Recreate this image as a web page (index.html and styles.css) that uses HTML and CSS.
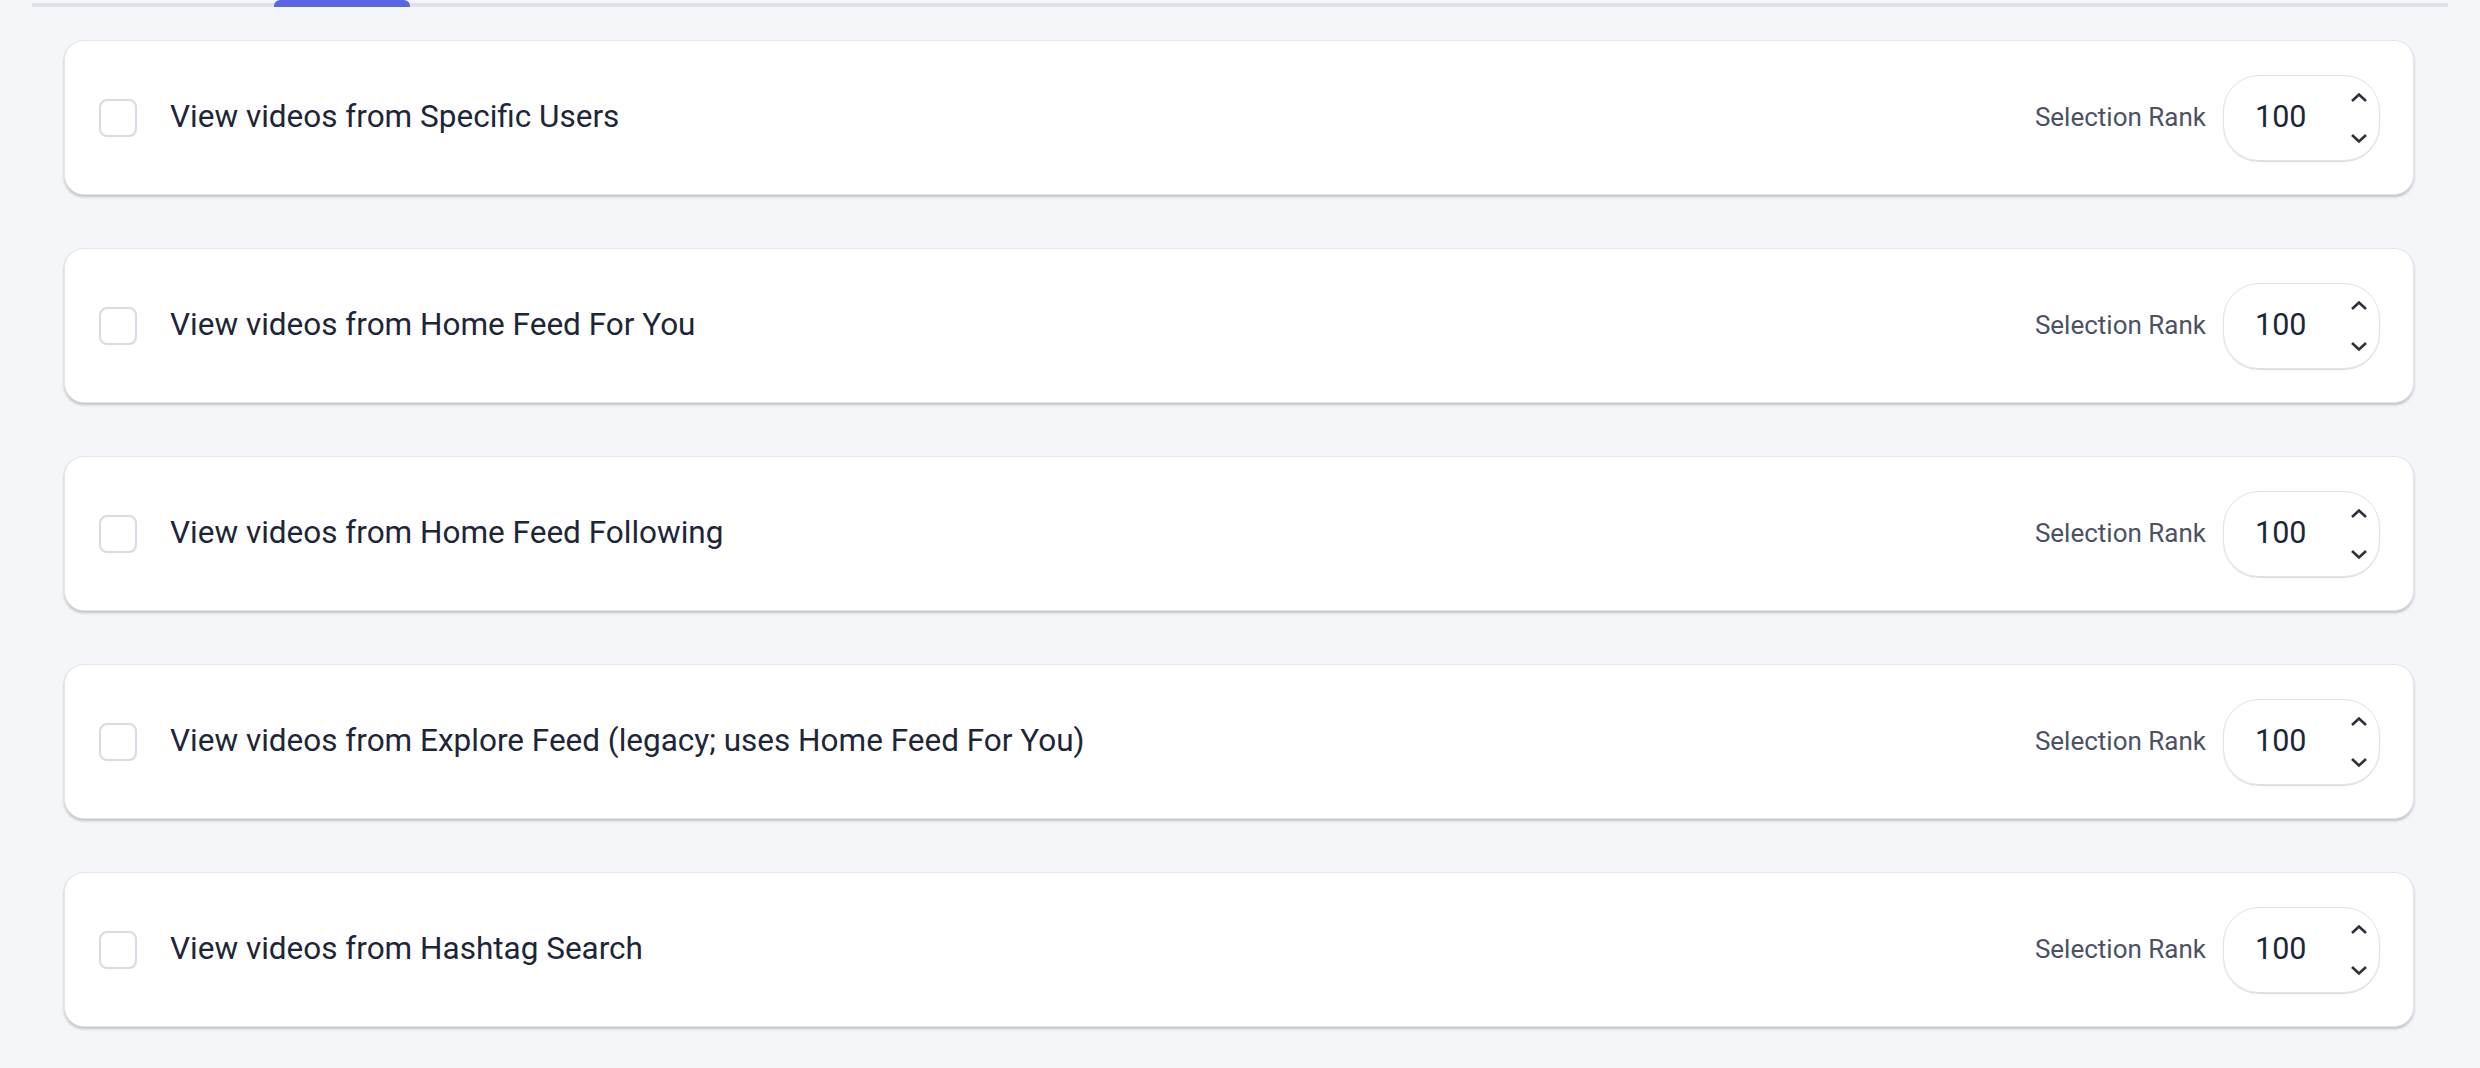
FILE: index.html
```html
<!DOCTYPE html>
<html>
<head>
    <meta charset="utf-8">
    <title>Video Sources</title>
    <link rel="stylesheet" href="styles.css">
</head>
<body>
    <div class="tabs">
        <div class="tab-indicator"></div>
    </div>

    <div class="source-list">
        <div class="source-card">
            <label class="source-label">
                <input type="checkbox" class="source-check">
                <span class="source-text">View videos from Specific Users</span>
            </label>
            <div class="rank">
                <span class="rank-title">Selection Rank</span>
                <div class="rank-box">
                    <span class="rank-value">100</span>
                    <div class="spin">
                        <svg width="18" height="11" viewBox="0 0 18 11"><path d="M2 9 L9 2.5 L16 9" fill="none" stroke="#30323a" stroke-width="2.6"/></svg>
                        <svg width="18" height="11" viewBox="0 0 18 11"><path d="M2 2 L9 8.5 L16 2" fill="none" stroke="#30323a" stroke-width="2.6"/></svg>
                    </div>
                </div>
            </div>
        </div>

        <div class="source-card">
            <label class="source-label">
                <input type="checkbox" class="source-check">
                <span class="source-text">View videos from Home Feed For You</span>
            </label>
            <div class="rank">
                <span class="rank-title">Selection Rank</span>
                <div class="rank-box">
                    <span class="rank-value">100</span>
                    <div class="spin">
                        <svg width="18" height="11" viewBox="0 0 18 11"><path d="M2 9 L9 2.5 L16 9" fill="none" stroke="#30323a" stroke-width="2.6"/></svg>
                        <svg width="18" height="11" viewBox="0 0 18 11"><path d="M2 2 L9 8.5 L16 2" fill="none" stroke="#30323a" stroke-width="2.6"/></svg>
                    </div>
                </div>
            </div>
        </div>

        <div class="source-card">
            <label class="source-label">
                <input type="checkbox" class="source-check">
                <span class="source-text">View videos from Home Feed Following</span>
            </label>
            <div class="rank">
                <span class="rank-title">Selection Rank</span>
                <div class="rank-box">
                    <span class="rank-value">100</span>
                    <div class="spin">
                        <svg width="18" height="11" viewBox="0 0 18 11"><path d="M2 9 L9 2.5 L16 9" fill="none" stroke="#30323a" stroke-width="2.6"/></svg>
                        <svg width="18" height="11" viewBox="0 0 18 11"><path d="M2 2 L9 8.5 L16 2" fill="none" stroke="#30323a" stroke-width="2.6"/></svg>
                    </div>
                </div>
            </div>
        </div>

        <div class="source-card">
            <label class="source-label">
                <input type="checkbox" class="source-check">
                <span class="source-text">View videos from Explore Feed (legacy; uses Home Feed For You)</span>
            </label>
            <div class="rank">
                <span class="rank-title">Selection Rank</span>
                <div class="rank-box">
                    <span class="rank-value">100</span>
                    <div class="spin">
                        <svg width="18" height="11" viewBox="0 0 18 11"><path d="M2 9 L9 2.5 L16 9" fill="none" stroke="#30323a" stroke-width="2.6"/></svg>
                        <svg width="18" height="11" viewBox="0 0 18 11"><path d="M2 2 L9 8.5 L16 2" fill="none" stroke="#30323a" stroke-width="2.6"/></svg>
                    </div>
                </div>
            </div>
        </div>

        <div class="source-card">
            <label class="source-label">
                <input type="checkbox" class="source-check">
                <span class="source-text">View videos from Hashtag Search</span>
            </label>
            <div class="rank">
                <span class="rank-title">Selection Rank</span>
                <div class="rank-box">
                    <span class="rank-value">100</span>
                    <div class="spin">
                        <svg width="18" height="11" viewBox="0 0 18 11"><path d="M2 9 L9 2.5 L16 9" fill="none" stroke="#30323a" stroke-width="2.6"/></svg>
                        <svg width="18" height="11" viewBox="0 0 18 11"><path d="M2 2 L9 8.5 L16 2" fill="none" stroke="#30323a" stroke-width="2.6"/></svg>
                    </div>
                </div>
            </div>
        </div>
    </div>
</body>
</html>
```

FILE: styles.css
```css
body {
    margin: 0;
    background: #f5f6fa;
    font-family: Roboto, "Liberation Sans", Arial, sans-serif;
    color: #1d2638;
}
.tabs {
    display: flex;
    align-items: flex-start;
    margin: 0 32px;
    height: 3px;
    border-bottom: 4px solid #dfe2e9;
}
.tab-indicator {
    margin-left: 242px;
    width: 136px;
    height: 7px;
    background: #5b66e6;
    border-radius: 6px 6px 0 0;
}
.source-list {
    margin: 33px 66px 0 64px;
}
.source-card {
    display: flex;
    align-items: center;
    justify-content: space-between;
    box-sizing: border-box;
    height: 155px;
    margin-bottom: 53px;
    padding: 0 33px 0 34px;
    background: #fff;
    border: 1px solid #e3e6ee;
    border-radius: 20px;
    box-shadow: 0 2px 3px rgba(0, 0, 0, 0.22);
}
.source-label {
    display: flex;
    align-items: center;
    gap: 33px;
    font-size: 31.5px;
    color: #1d2638;
}
.source-text {
    margin-bottom: 3px;
}
.source-check {
    appearance: none;
    width: 38px;
    height: 38px;
    margin: 0;
    border: 2px solid #d6dbe8;
    border-radius: 8px;
    background: #fff;
}
.rank {
    display: flex;
    align-items: center;
    gap: 17px;
}
.rank-title {
    font-size: 26px;
    color: #4b5263;
    margin-bottom: 2px;
}
.rank-box {
    display: flex;
    align-items: center;
    justify-content: space-between;
    box-sizing: border-box;
    width: 157px;
    height: 86px;
    padding: 0 11px 0 31px;
    border: 1.5px solid #dde1ec;
    border-radius: 36px;
    box-shadow: 0 1px 1px rgba(0, 0, 0, 0.15);
}
.rank-value {
    font-size: 30.5px;
    color: #1d2638;
    margin-bottom: 2px;
}
.spin {
    display: flex;
    flex-direction: column;
    gap: 30px;
}
.spin svg {
    display: block;
}
```
